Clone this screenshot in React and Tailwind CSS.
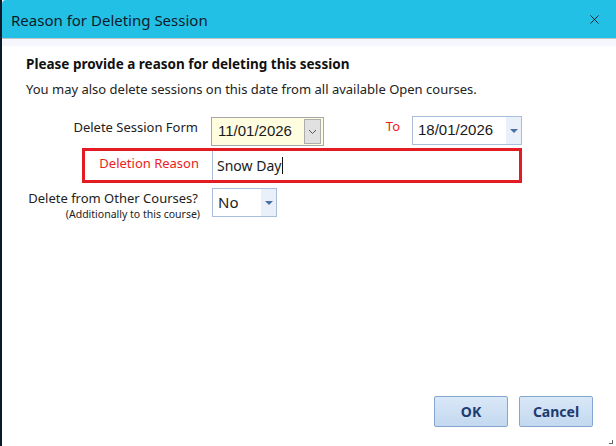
import { X } from 'lucide-react';

const ui = "font-['Noto_Sans','Open_Sans',sans-serif]";
const arial = "font-['Liberation_Sans',Arial,sans-serif]";

function Chevron() {
  return (
    <svg width="9" height="6" viewBox="0 0 9 6" className="text-[#555]">
      <path d="M1 1 L4.5 4.5 L8 1" fill="none" stroke="currentColor" strokeWidth="1" />
    </svg>
  );
}

function Triangle() {
  return (
    <svg width="8" height="4" viewBox="0 0 8 4">
      <path d="M0 0 H8 L4 4 Z" fill="#4a6ea6" />
    </svg>
  );
}

function BlueDrop({ value, width }) {
  return (
    <div className={`flex h-[29px] border border-[#a8bedb] bg-white ${width}`}>
      <div className="flex-1 pl-[5px] flex items-center text-[15px] text-[#1a1a1a]">{value}</div>
      <div className="w-[15px] bg-[#e9f0fa] flex items-center justify-center">
        <Triangle />
      </div>
    </div>
  );
}

export default function App() {
  return (
    <div className={`w-[616px] h-[446px] bg-white flex flex-col border-l-2 border-[#0b1a2b] relative overflow-hidden ${ui}`}>
      {/* title bar */}
      <div className="h-[38px] bg-[#23c0e5] flex items-center justify-between pl-[9px] pr-[14px] rounded-tl-[4px]">
        <span className="text-[15px] text-[#0d1b2a] leading-none pt-[2px]">Reason for Deleting Session</span>
        <X size={15} strokeWidth={1.4} className="text-[#111]" />
      </div>
      <div className="h-px bg-[#c2c6cc]" />
      <div className="h-[7px] bg-[#f5f7fc]" />

      <div className="flex-1 flex flex-col pl-[24px] pr-[23px]">
        <div className="mt-[9px] text-[13.5px] font-bold text-[#111] leading-[18px]">
          Please provide a reason for deleting this session
        </div>
        <div className="mt-[7px] text-[13px] text-[#222] leading-[18px]">
          You may also delete sessions on this date from all available Open courses.
        </div>

        {/* date range row */}
        <div className="mt-[18px] flex items-start">
          <div className="w-[185px] pr-[13px] text-right text-[13px] text-[#222] leading-[18px] pt-[2px]">
            Delete Session Form
          </div>
          <div className="w-[113px] h-[29px] mt-[1px] border border-[#a7a7a7] bg-[#fffde0] flex items-center">
            <span className={`flex-1 pl-[6px] text-[15px] text-[#1a1a1a] ${arial}`}>11/01/2026</span>
            <div className="w-[17px] h-[25px] mr-[2px] bg-[#e1e1e1] border border-[#adadad] flex items-center justify-center">
              <Chevron />
            </div>
          </div>
          <div className="w-[88px] pr-[12px] text-right text-[13px] text-[#ee1c1c] leading-[18px] pt-[1px]">
            To
          </div>
          <BlueDrop value={<span className={arial}>18/01/2026</span>} width="w-[110px]" />
        </div>

        {/* highlighted reason row */}
        <div className="mt-[2px] ml-[56px] w-[440px] h-[35px] border-[3px] border-[#e31c24] flex">
          <div className="w-[127px] pr-[13px] text-right text-[13px] text-[#ee2121] leading-[18px] pt-[3px]">
            Deletion Reason
          </div>
          <div className="flex-1 border-l border-[#a8bedb] flex items-center pl-[4px] text-[14px] text-[#1a1a1a]">
            Snow Day<span className="w-px h-[17px] bg-[#111] ml-px" />
          </div>
        </div>

        {/* other courses row */}
        <div className="mt-[5px] flex items-start">
          <div className="w-[186px] text-right text-[#222]">
            <div className="pr-[14px] text-[13px] leading-[18px] pt-[1px]">Delete from Other Courses?</div>
            <div className="pr-[12px] text-[10.5px] leading-[13px] mt-[1px]">(Additionally to this course)</div>
          </div>
          <BlueDrop value="No" width="w-[65px]" />
        </div>

        <div className="mt-auto mb-[19px] flex justify-end gap-[11px]">
          <button className="w-[74px] h-[31px] rounded-[2px] border border-[#84a6d1] bg-gradient-to-b from-[#dae8f7] to-[#c3d8ef] text-[14px] font-bold text-[#1d3b70]">
            OK
          </button>
          <button className="w-[74px] h-[31px] rounded-[2px] border border-[#84a6d1] bg-gradient-to-b from-[#dae8f7] to-[#c3d8ef] text-[14px] font-bold text-[#1d3b70]">
            Cancel
          </button>
        </div>
      </div>

      {/* resize grip */}
      <div className="absolute right-[3px] bottom-[2px] w-[4px] h-[4px] border-r border-b border-[#666]" />
    </div>
  );
}
